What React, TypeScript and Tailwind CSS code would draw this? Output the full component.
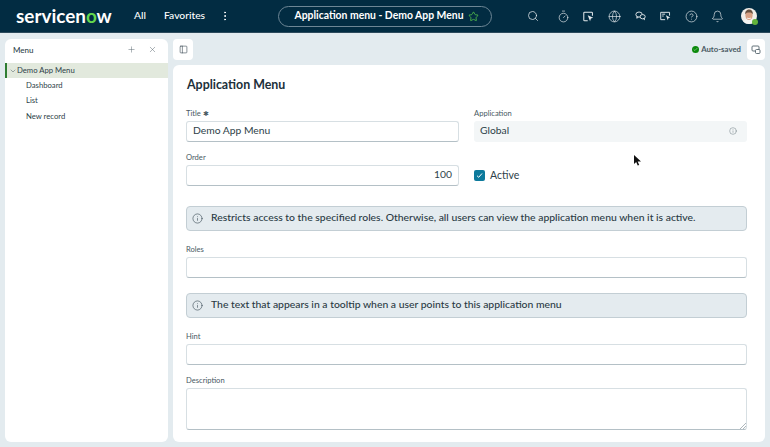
import { Bell, Check, ChevronDown, CircleHelp, Globe, Info, MoreVertical, PanelLeft, Plus, Search, Star, Timer, X } from 'lucide-react';

const font = { fontFamily: 'Lato, "Open Sans", sans-serif' };

const CursorWindowIcon = () => (
  <svg width="11" height="11" viewBox="0 0 14 14" fill="none" stroke="currentColor" strokeWidth="1.3">
    <path d="M6 12.500H2a1 1 0 0 1-1-1v-9a1 1 0 0 1 1-1h9a1 1 0 0 1 1 1V6" />
    <path d="M6 5.500l7 3-3 1-1 3.500z" fill="currentColor" stroke="none" />
  </svg>
);

const ChatIcon = () => (
  <svg width="11" height="10" viewBox="0 0 15 14" fill="none" stroke="currentColor" strokeWidth="1.300">
    <ellipse cx="5.500" cy="5" rx="4.500" ry="3.600" />
    <ellipse cx="10.500" cy="8" rx="3.600" ry="3" fill="#022c42" />
    <path d="M2.800 8l-.6 2 2.400-1.200M11.500 10.800l1.600 1.400-.2-2" />
  </svg>
);

const FormCursorIcon = () => (
  <svg width="11" height="10" viewBox="0 0 15 13" fill="none" stroke="currentColor" strokeWidth="1.300">
    <path d="M7 11.500H1V1.500h12V6" />
    <path d="M3 4h4M3 6.500h2" />
    <path d="M8 5.500l6 3-2.400.8-.9 2.900z" fill="currentColor" stroke="none" />
  </svg>
);

const Avatar = () => (
  <div className="relative h-[16px] w-[16px]">
    <svg width="16" height="16" viewBox="0 0 16 16" className="rounded-full">
      <rect width="16" height="16" fill="#f2eee9" />
      <path d="M2 16c0-3.500 2.500-4.500 6-4.500s6 1 6 4.500z" fill="#f4f4f2" />
      <ellipse cx="8" cy="7.500" rx="3.600" ry="4.600" fill="#d9a184" />
      <path d="M4.200 6.500C4 3 6 1.600 8.200 1.600s3.900 1.600 3.700 4.900C11 4.800 9.500 4.500 8 4.500s-3 .3-3.800 2z" fill="#6b5240" />
      <path d="M6 10c1.200.8 2.800.8 4 0" stroke="#fff" strokeWidth=".8" fill="none" />
    </svg>
    <span className="absolute -right-[1px] -bottom-[1px] h-[6px] w-[6px] rounded-full bg-[#62b23a]" />
  </div>
);

const NavIcon = ({ children }: { children: React.ReactNode }) => (
  <span className="flex w-[13px] justify-center">{children}</span>
);

const TopBar = () => (
  <header className="flex h-[33px] shrink-0 items-center border-b border-[#2c4a5c] bg-[#022c42] text-white">
    <div className="ml-[16px] w-[97px] text-[18.900px] leading-none font-bold whitespace-nowrap">
      <span>servicen</span>
      <span className="text-[#62d84e]">o</span>
      <span>w</span>
    </div>
    <span className="ml-[21px] w-[11px] text-[10.300px] font-medium">All</span>
    <span className="ml-[19px] w-[41px] text-[10.300px] font-medium">Favorites</span>
    <MoreVertical size={12} strokeWidth={2} className="ml-[14px]" />
    <div className="ml-[47px] flex h-[21px] w-[214px] items-center justify-center gap-[4px] rounded-full border border-[#6d8695] pl-[3px] text-[10.400px] font-bold">
      <span>Application menu - Demo App Menu</span>
      <Star size={11} strokeWidth={1.5} className="text-[#62d84e]" />
    </div>
    <div className="ml-[35px] flex items-center text-[#e4e9ec]">
      <Search size={12} strokeWidth={1.5} />
      <div className="ml-[17.500px] flex items-center gap-[12.700px]">
        <NavIcon><Timer size={13} strokeWidth={1.25} /></NavIcon>
        <NavIcon><CursorWindowIcon /></NavIcon>
        <NavIcon><Globe size={13} strokeWidth={1.25} /></NavIcon>
        <NavIcon><ChatIcon /></NavIcon>
        <NavIcon><FormCursorIcon /></NavIcon>
        <NavIcon><CircleHelp size={13} strokeWidth={1.25} /></NavIcon>
        <NavIcon><Bell size={13} strokeWidth={1.25} /></NavIcon>
      </div>
      <div className="ml-[17.500px]">
        <Avatar />
      </div>
    </div>
  </header>
);

const Sidebar = () => (
  <aside className="flex w-[163px] shrink-0 flex-col rounded-[6px] bg-white text-[#2e3f49]">
    <div className="flex h-[21px] items-center pr-[11px] pl-[8px] text-[8px] font-medium">
      <span className="flex-1">Menu</span>
      <Plus size={9} strokeWidth={1.25} className="text-[#53636c]" />
      <X size={9} strokeWidth={1.25} className="ml-[12px] text-[#53636c]" />
    </div>
    <div className="mt-[3px] flex h-[15px] items-center border-l-[2px] border-[#2f7d32] bg-[#e2e9dd] pl-[2px] text-[7.700px]">
      <ChevronDown size={8} strokeWidth={1.25} />
      <span>Demo App Menu</span>
    </div>
    <ul className="pl-[21px] text-[7.700px]">
      <li className="flex h-[15.500px] items-center">Dashboard</li>
      <li className="flex h-[15.500px] items-center">List</li>
      <li className="flex h-[15.500px] items-center">New record</li>
    </ul>
  </aside>
);

const Label = ({ children }: { children: React.ReactNode }) => (
  <div className="flex h-[13px] items-center text-[7.600px] text-[#4a5a64]">{children}</div>
);

const Field = ({ label, value, right, required }: { label: string; value?: string; right?: boolean; required?: boolean }) => (
  <div>
    <Label>
      {label}
      {required && <span className="ml-[2px] text-[7px]">✱</span>}
    </Label>
    <div
      className={`mt-[1px] flex h-[21px] items-center rounded-[3px] border border-[#d7dfe3] border-b-[#b4c0c6] bg-white px-[6px] pb-[1px] text-[10.300px] text-[#2e3f49] ${right ? 'justify-end' : ''}`}
    >
      {value}
    </div>
  </div>
);

const Notice = ({ children }: { children: string }) => (
  <div className="flex h-[25px] items-center gap-[8px] rounded-[4px] border border-[#c3ced4] bg-[#e4ebef] px-[5px] text-[10.400px] font-medium text-[#2a3a44]">
    <Info size={11} strokeWidth={1.25} className="text-[#2e3f49]" />
    <span>{children}</span>
  </div>
);

const FormCard = () => (
  <section className="flex-1 rounded-[6px] bg-white px-[13px] pt-[11px] text-[#2e3f49]">
    <h1 className="ml-[1px] text-[12.400px] leading-[18px] font-bold text-[#20303a]">Application Menu</h1>
    <div className="mt-[13px] grid grid-cols-[273px_273px] gap-x-[15px] gap-y-[9px]">
      <Field label="Title" value="Demo App Menu" required />
      <div>
        <Label>Application</Label>
        <div className="mt-[1px] flex h-[21px] items-center justify-between rounded-[3px] bg-[#f3f6f7] px-[6px] pb-[1px] text-[10.300px]">
          Global
          <Info size={8} strokeWidth={1.25} className="mr-[4px] text-[#53636c]" />
        </div>
      </div>
      <Field label="Order" value="100" right />
      <div className="flex items-center gap-[5px] pt-[17px] pb-[3px] text-[10.500px]">
        <span className="flex h-[11px] w-[11px] items-center justify-center rounded-[2px] bg-[#0d7a9c]">
          <svg width="7" height="7" viewBox="0 0 7 7" fill="none" stroke="#fff" strokeWidth="1">
            <path d="M1 3.700l1.700 1.600L6 1.500" />
          </svg>
        </span>
        Active
      </div>
    </div>
    <div className="mt-[19px] w-[561px]">
      <Notice>Restricts access to the specified roles. Otherwise, all users can view the application menu when it is active.</Notice>
      <div className="mt-[12px]">
        <Field label="Roles" />
      </div>
      <div className="mt-[15px]">
        <Notice>The text that appears in a tooltip when a user points to this application menu</Notice>
      </div>
      <div className="mt-[12px]">
        <Field label="Hint" />
      </div>
      <div className="mt-[9px]">
        <Label>Description</Label>
        <div className="relative mt-[1px] h-[42px] rounded-[3px] border border-[#d7dfe3] border-b-[#b4c0c6] bg-white">
          <svg width="6" height="6" viewBox="0 0 6 6" className="absolute right-0 bottom-0" stroke="#8d9aa1" strokeWidth=".7">
            <path d="M0 6L6 0M3 6l3-3" />
          </svg>
        </div>
      </div>
    </div>
  </section>
);

export default function App() {
  return (
    <div style={font} className="relative flex h-[447px] w-[770px] flex-col overflow-hidden bg-[#e3ebef]">
      <TopBar />
      <div className="flex min-h-0 flex-1 gap-[5px] pt-[6px] pr-[5px] pb-[5px] pl-[5px]">
        <Sidebar />
        <div className="flex min-w-0 flex-1 flex-col gap-[5px]">
          <div className="flex h-[21px] items-center">
            <div className="flex h-[21px] w-[20px] items-center justify-center rounded-[4px] bg-white">
              <PanelLeft size={9} strokeWidth={1.5} className="text-[#2e3f49]" />
            </div>
            <div className="ml-auto flex items-center gap-[2px] text-[7.800px] font-bold text-[#4a5a64]">
              <span className="flex h-[7px] w-[7px] items-center justify-center rounded-full bg-[#0b8a0b]">
                <Check size={5} strokeWidth={2} className="text-white" />
              </span>
              Auto-saved
            </div>
            <div className="ml-[6px] flex h-[21px] w-[18px] items-center justify-center rounded-[4px] bg-white text-[#53636c]">
              <svg width="10" height="10" viewBox="0 0 10 10" fill="none" stroke="currentColor" strokeWidth=".9">
                <rect x="1" y="1" width="7" height="5" rx="1" />
                <rect x="4.500" y="4.500" width="4.500" height="4" rx="1" fill="#fff" />
              </svg>
            </div>
          </div>
          <FormCard />
        </div>
      </div>
      <svg width="10" height="13" viewBox="0 0 10 13" className="absolute top-[154px] left-[633px]">
        <path d="M1 1v9l2.200-2 1.500 3.500 1.500-.6L4.700 7.500H8z" fill="#111" />
      </svg>
    </div>
  );
}
